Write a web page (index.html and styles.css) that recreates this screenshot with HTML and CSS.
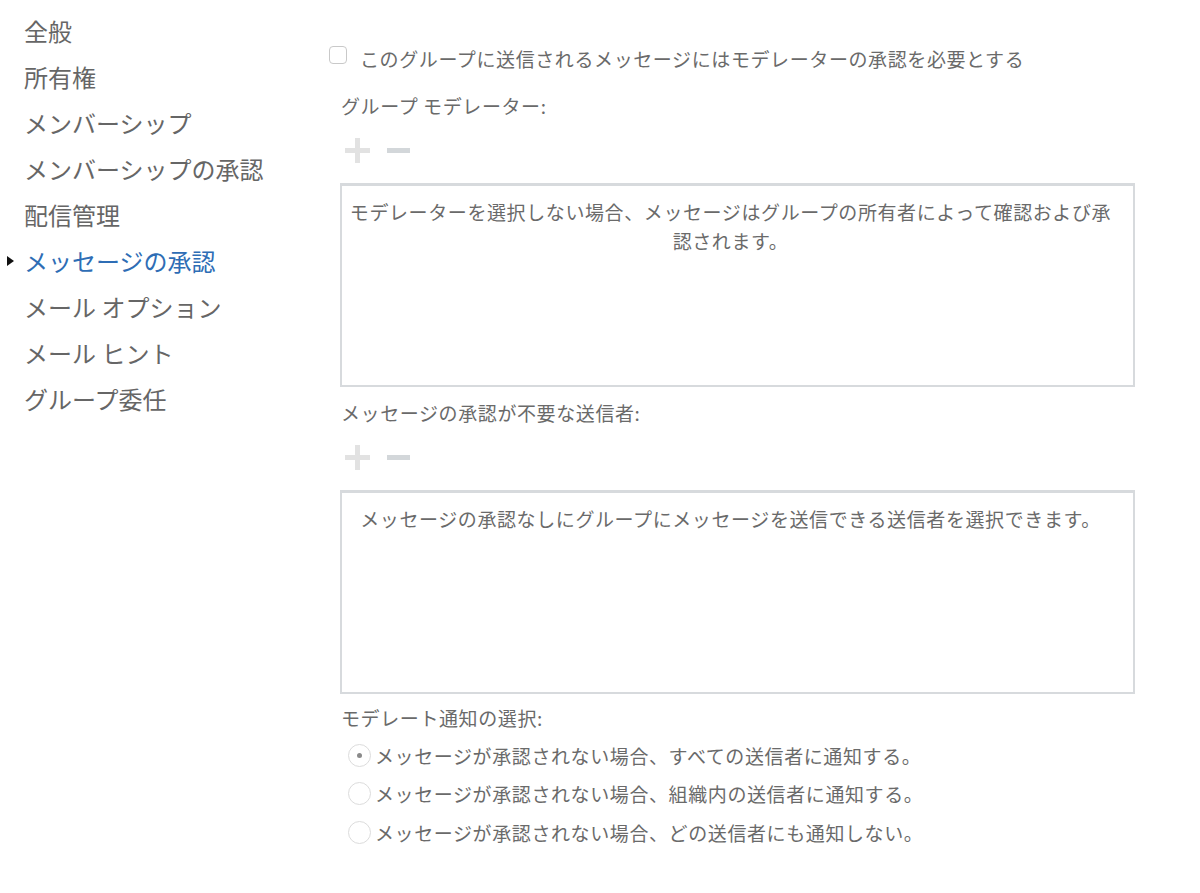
FILE: index.html
```html
<!DOCTYPE html>
<html lang="ja">

<head>
    <meta charset="UTF-8">
    <meta name="viewport" content="width=device-width, initial-scale=1.0">
    <title>メッセージの承認</title>
    <link rel="stylesheet" href="styles.css">
</head>

<body>
    <div class="page">
        <ul class="nav">
            <li>全般</li>
            <li>所有権</li>
            <li>メンバーシップ</li>
            <li>メンバーシップの承認</li>
            <li>配信管理</li>
            <li class="active">メッセージの承認</li>
            <li>メール オプション</li>
            <li>メール ヒント</li>
            <li>グループ委任</li>
        </ul>

        <div class="main">
            <label class="check-row">
                <span class="checkbox"></span>
                <span>このグループに送信されるメッセージにはモデレーターの承認を必要とする</span>
            </label>

            <div class="label first">グループ モデレーター:</div>
            <div class="tools">
                <span class="plus"></span>
                <span class="minus"></span>
            </div>
            <div class="box">モデレーターを選択しない場合、メッセージはグループの所有者によって確認および承認されます。</div>

            <div class="label second">メッセージの承認が不要な送信者:</div>
            <div class="tools">
                <span class="plus"></span>
                <span class="minus"></span>
            </div>
            <div class="box">メッセージの承認なしにグループにメッセージを送信できる送信者を選択できます。</div>

            <div class="label third">モデレート通知の選択:</div>
            <div class="radios">
                <div class="radio-row"><span class="radio checked"></span>メッセージが承認されない場合、すべての送信者に通知する。</div>
                <div class="radio-row"><span class="radio"></span>メッセージが承認されない場合、組織内の送信者に通知する。</div>
                <div class="radio-row"><span class="radio"></span>メッセージが承認されない場合、どの送信者にも通知しない。</div>
            </div>
        </div>
    </div>
</body>

</html>
```

FILE: styles.css
```css
* {
    margin: 0;
    padding: 0;
    box-sizing: border-box;
}

body {
    background: #fff;
    color: #6a6a6a;
    font-family: "Noto Sans CJK JP", "Noto Sans", sans-serif;
}

.page {
    display: flex;
    width: 1200px;
    height: 893px;
}

.nav {
    list-style: none;
    width: 329px;
    padding: 8px 0 0 24px;
}

.nav li {
    position: relative;
    height: 46px;
    line-height: 46px;
    font-size: 24px;
    white-space: nowrap;
    color: #666;
}

.nav li.active {
    color: #2e6db5;
}

.nav li.active::before {
    content: "";
    position: absolute;
    left: -17px;
    top: 18px;
    border-left: 7px solid #111;
    border-top: 5px solid transparent;
    border-bottom: 5px solid transparent;
}

.main {
    width: 806px;
    padding-top: 46px;
    letter-spacing: 0.6px;
}

.check-row {
    display: flex;
    align-items: center;
    height: 24px;
    font-size: 19px;
    white-space: nowrap;
}

.checkbox {
    width: 18px;
    height: 18px;
    border: 1.5px solid #c9c9c9;
    border-radius: 4px;
    margin-right: 13px;
    margin-top: -7px;
}

.label {
    height: 28px;
    line-height: 28px;
    font-size: 19px;
    padding-left: 12px;
}

.label.first {
    margin-top: 22px;
}

.label.second {
    margin-top: 12px;
}

.label.third {
    margin-top: 10px;
}

.tools {
    display: flex;
    align-items: center;
    gap: 17px;
    height: 30px;
    margin-top: 15px;
    padding-left: 16px;
}

.plus {
    position: relative;
    width: 25px;
    height: 25px;
}

.plus::before,
.plus::after {
    content: "";
    position: absolute;
    background: #e2e2e2;
}

.plus::before {
    left: 0;
    top: 10px;
    width: 25px;
    height: 5px;
}

.plus::after {
    left: 10px;
    top: 0;
    width: 5px;
    height: 25px;
}

.minus {
    width: 23px;
    height: 5px;
    background: #d3d7da;
}

.box {
    height: 204px;
    margin: 18px 0 0 11px;
    width: 795px;
    border: 2px solid #d7dadd;
    border-top-width: 3px;
    padding: 11px 20px 0 6px;
    font-size: 19px;
    line-height: 29px;
    text-align: center;
}

.radios {
    margin-top: 4px;
    padding-left: 19px;
}

.radio-row {
    display: flex;
    align-items: center;
    height: 38.5px;
    font-size: 19px;
    white-space: nowrap;
}

.radio {
    position: relative;
    width: 23px;
    height: 23px;
    border: 1px solid #dcdcdc;
    border-radius: 50%;
    margin-right: 4px;
}

.radio.checked::after {
    content: "";
    position: absolute;
    left: 8px;
    top: 8px;
    width: 5px;
    height: 5px;
    border-radius: 50%;
    background: #8a8a8a;
}
```
